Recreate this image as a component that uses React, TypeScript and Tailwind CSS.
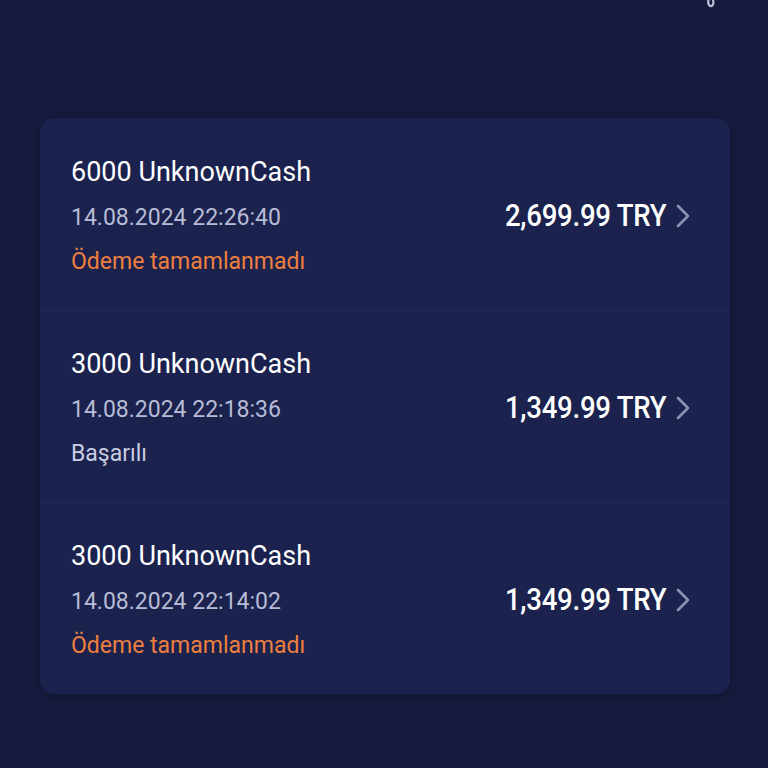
import React from "react";

const rows = [
  { title: "6000 UnknownCash", date: "14.08.2024 22:26:40", status: "Ödeme tamamlanmadı", ok: false, amount: "2,699.99 TRY" },
  { title: "3000 UnknownCash", date: "14.08.2024 22:18:36", status: "Başarılı", ok: true, amount: "1,349.99 TRY" },
  { title: "3000 UnknownCash", date: "14.08.2024 22:14:02", status: "Ödeme tamamlanmadı", ok: false, amount: "1,349.99 TRY" },
];

export default function App() {
  return (
    <div className="w-[768px] h-[768px] bg-[#161b3d] relative overflow-hidden" style={{ fontFamily: "Roboto, 'Noto Sans', sans-serif" }}>
      <svg className="absolute left-[700px] top-[-8px]" width="20" height="18" viewBox="0 0 20 18" fill="none">
        <path d="M12 2 C 9 6, 6 11, 10 14 C 13 15, 14 11, 13 8" stroke="#b9bed6" strokeWidth="2.2" strokeLinecap="round" />
      </svg>
      <div className="pt-[118px] px-[40px]">
        <div className="w-[690px] rounded-[14px] bg-[#1b224e] flex flex-col shadow-[0_2px_6px_rgba(0,0,0,0.25)]">
          {rows.map((r, i) => (
            <div key={i} className={`flex items-center h-[192px] pl-[31px] pr-[38px] pt-[3px] ${i > 0 ? "border-t border-[#222a58]" : ""}`}>
              <div className="flex flex-col flex-1">
                <div className="text-[27px] leading-[30px] text-white">{r.title}</div>
                <div className="text-[23px] leading-[26px] text-[#b7bcd6] mt-[18px]">{r.date}</div>
                <div className={`text-[23px] leading-[26px] mt-[18px] ${r.ok ? "text-[#c9cde2]" : "text-[#ee7f3e]"}`}>{r.status}</div>
              </div>
              <div className="flex items-center">
                <span className="text-[31px] leading-[34px] font-medium text-white tracking-[-0.3px] scale-x-[0.89] origin-right inline-block">{r.amount}</span>
                <svg className="ml-[8px]" width="18" height="26" viewBox="0 0 18 26" fill="none">
                  <path d="M4 3 L14 13 L4 23" stroke="#8d93b3" strokeWidth="2.6" strokeLinecap="round" strokeLinejoin="round" />
                </svg>
              </div>
            </div>
          ))}
        </div>
      </div>
    </div>
  );
}
